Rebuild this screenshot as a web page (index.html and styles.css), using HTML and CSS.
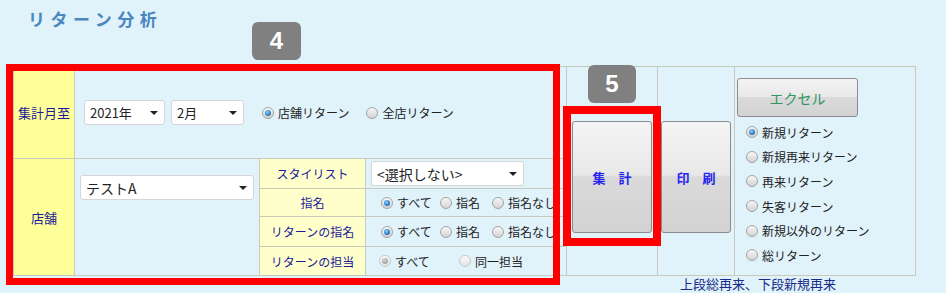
FILE: index.html
```html
<!DOCTYPE html>
<html lang="ja">
<head>
  <meta charset="UTF-8">
  <title>リターン分析</title>
  <link rel="stylesheet" href="styles.css">
</head>
<body>

  <div class="page">
    <h1 class="title">リターン分析</h1>

    <div class="grid">
      <div class="cell lbl main-lbl month-lbl">集計月至</div>

      <div class="cell period">
        <div class="select sel-year"><span>2021年</span><i class="caret"></i></div>
        <div class="select sel-month"><span>2月</span><i class="caret"></i></div>
        <label class="opt opt-shop"><i class="radio on"></i>店舗リターン</label>
        <label class="opt"><i class="radio"></i>全店リターン</label>
      </div>

      <div class="cell col-sum">
        <button class="btn btn-tall btn-sum">集　計</button>
      </div>

      <div class="cell col-print">
        <button class="btn btn-tall btn-print">印　刷</button>
      </div>

      <div class="cell col-excel">
        <button class="btn btn-excel">エクセル</button>
        <div class="type-list">
          <label class="opt"><i class="radio on"></i>新規リターン</label>
          <label class="opt"><i class="radio"></i>新規再来リターン</label>
          <label class="opt"><i class="radio"></i>再来リターン</label>
          <label class="opt"><i class="radio"></i>失客リターン</label>
          <label class="opt"><i class="radio"></i>新規以外のリターン</label>
          <label class="opt"><i class="radio"></i>総リターン</label>
        </div>
      </div>

      <div class="cell lbl main-lbl shop-lbl">店舗</div>

      <div class="cell shop">
        <div class="select sel-shop"><span>テストA</span><i class="caret"></i></div>
      </div>

      <div class="cell lbl sub-lbl r2">スタイリスト</div>
      <div class="cell ctrl r2">
        <div class="select sel-stylist"><span>&lt;選択しない&gt;</span><i class="caret"></i></div>
      </div>

      <div class="cell lbl sub-lbl r3">指名</div>
      <div class="cell ctrl r3 radios">
        <label class="opt w-all"><i class="radio on"></i>すべて</label>
        <label class="opt w-name"><i class="radio"></i>指名</label>
        <label class="opt"><i class="radio"></i>指名なし</label>
      </div>

      <div class="cell lbl sub-lbl r4">リターンの指名</div>
      <div class="cell ctrl r4 radios">
        <label class="opt w-all"><i class="radio on"></i>すべて</label>
        <label class="opt w-name"><i class="radio"></i>指名</label>
        <label class="opt"><i class="radio"></i>指名なし</label>
      </div>

      <div class="cell lbl sub-lbl r5">リターンの担当</div>
      <div class="cell ctrl r5 radios radios-staff">
        <label class="opt w-staff"><i class="radio on off"></i>すべて</label>
        <label class="opt"><i class="radio off"></i>同一担当</label>
      </div>
    </div>

    <div class="note">上段総再来、下段新規再来</div>

    <div class="mark mark-filter"></div>
    <div class="mark mark-sum"></div>
    <div class="badge badge-4">4</div>
    <div class="badge badge-5">5</div>
  </div>

</body>
</html>
```

FILE: styles.css
```css
body {
  margin: 0;
  background: #e0f2fa;
  font-family: "Noto Sans CJK JP", "Liberation Sans", sans-serif;
  color: #222;
}

.page {
  position: relative;
  width: 946px;
  height: 293px;
  overflow: hidden;
}

.title {
  margin: 0;
  padding: 8px 0 0 28px;
  font-size: 17px;
  line-height: 22px;
  letter-spacing: 5.5px;
  color: #4b86bf;
  font-weight: bold;
}

/* table made from a grid, the gaps are the lines */
.grid {
  display: grid;
  grid-template-columns: 60px 184px 105px 200px 90px 76px 180px;
  grid-template-rows: 91px 29px 27px 29px 28px;
  gap: 1px;
  background: #c9c9bc;
  border: 1px solid #c9c9bc;
  width: fit-content;
  margin: 36px 0 0 13px;
}

.cell {
  background: #e0f2fa;
  font-size: 12px;
  overflow: hidden;
  white-space: nowrap;
}

.lbl {
  display: flex;
  align-items: center;
  justify-content: center;
  color: #1a1a9a;
}

.main-lbl {
  background: #ffff99;
  font-size: 13px;
}

.sub-lbl {
  background: #ffffcc;
  grid-column: 3;
}

.month-lbl { grid-column: 1; grid-row: 1; }
.shop-lbl { grid-column: 1; grid-row: 2 / 6; }

.period {
  grid-column: 2 / 5;
  grid-row: 1;
  display: flex;
  align-items: center;
  padding-left: 9px;
}

.col-sum { grid-column: 5; grid-row: 1 / 6; padding: 54px 0 0 5px; }
.col-print { grid-column: 6; grid-row: 1 / 6; padding: 54px 0 0 3px; }
.col-excel { grid-column: 7; grid-row: 1 / 6; padding: 11px 0 0 2px; }

.shop { grid-column: 2; grid-row: 2 / 6; padding: 16px 0 0 5px; }

.ctrl {
  grid-column: 4;
  display: flex;
  align-items: center;
}

.r2 { grid-row: 2; }
.r3 { grid-row: 3; }
.r4 { grid-row: 4; }
.r5 { grid-row: 5; }

.r2.ctrl { padding-left: 5px; }
.radios { padding-left: 15px; }
.radios-staff { padding-left: 13px; }

/* fake selects */
.select {
  display: flex;
  align-items: center;
  justify-content: space-between;
  height: 25px;
  box-sizing: border-box;
  background: #fff;
  border: 1px solid #d6d6d6;
  border-radius: 3px;
  padding: 0 6px 0 5px;
  font-size: 13px;
  color: #222;
}

.caret {
  width: 0;
  height: 0;
  border-left: 4px solid transparent;
  border-right: 4px solid transparent;
  border-top: 4px solid #222;
}

.sel-year { width: 81px; margin-right: 6px; }
.sel-month { width: 73px; margin-right: 18px; }
.sel-shop { width: 174px; font-size: 14px; }
.sel-stylist { width: 153px; font-size: 14px; }

/* radios */
.opt {
  display: flex;
  align-items: center;
  font-size: 12px;
  color: #222;
}

.opt-shop { margin-right: 17px; }
.w-all { width: 59px; }
.w-name { width: 52px; }
.w-staff { width: 80px; }

.radio {
  width: 12px;
  height: 12px;
  box-sizing: border-box;
  border-radius: 50%;
  border: 1px solid #a4a4a4;
  background: linear-gradient(#f8f8f8, #d2d2d2);
  margin-right: 4px;
  display: flex;
  align-items: center;
  justify-content: center;
  flex: none;
}

.radio.on::after {
  content: "";
  width: 6px;
  height: 6px;
  border-radius: 50%;
  background: radial-gradient(circle at 40% 35%, #8fd0ff, #1e6fb8 70%, #174e86);
}

.radio.off {
  border-color: #c8c8c8;
  background: linear-gradient(#fafafa, #e4e4e4);
}

.radio.on.off::after {
  background: radial-gradient(circle at 40% 35%, #d8d8d8, #8a8a8a);
}

.type-list {
  margin-top: 3px;
  padding-left: 9px;
}

.type-list .opt {
  height: 24.6px;
  font-size: 12px;
}

/* buttons */
.btn {
  font-family: inherit;
  border: 1px solid #8c8c8c;
  border-radius: 3px;
  background: linear-gradient(#f4f4f4 0%, #e8e8e8 48%, #dadada 50%, #d2d2d2 100%);
  padding: 0;
  cursor: pointer;
  display: block;
}

.btn-tall {
  height: 112px;
  font-size: 13px;
  font-weight: bold;
  color: #2525f0;
}

.btn-sum { width: 80px; }
.btn-print { width: 70px; }

.btn-excel {
  width: 121px;
  height: 39px;
  font-size: 14px;
  color: #2f9460;
}

.note {
  padding-left: 680px;
  font-size: 13px;
  line-height: 16px;
  color: #1a2a8a;
}

/* annotations over the screenshot */
.mark {
  position: absolute;
  border: 7px solid #ff0000;
  box-sizing: border-box;
}

.mark-filter { left: 6px; top: 64px; width: 554px; height: 221px; }
.mark-sum { left: 563px; top: 106px; width: 98px; height: 140px; border-width: 8px; }

.badge {
  position: absolute;
  width: 49px;
  height: 38px;
  border-radius: 6px;
  background: #808080;
  color: #fff;
  font-family: "Liberation Sans", sans-serif;
  font-weight: bold;
  font-size: 24px;
  line-height: 38px;
  text-align: center;
}

.badge-4 { left: 252px; top: 22px; }
.badge-5 { left: 588px; top: 65px; width: 48px; }
```
